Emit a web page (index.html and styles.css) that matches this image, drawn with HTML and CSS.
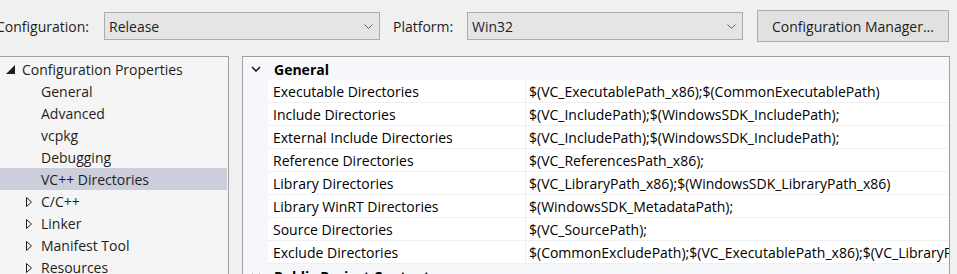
FILE: index.html
```html
<!DOCTYPE html>
<html>
<head>
    <title>Property Pages</title>
    <link rel="stylesheet" href="styles.css">
</head>
<body>
    <div class="toolbar">
        <span class="label">Configuration:</span>
        <div class="combo combo-config">
            <span>Release</span>
            <svg class="combo-arrow" width="9" height="5" viewBox="0 0 9 5"><path d="M0.5 0.5 L4.5 4.5 L8.5 0.5" fill="none" stroke="#606060" stroke-width="1"/></svg>
        </div>
        <span class="label label-platform">Platform:</span>
        <div class="combo combo-platform">
            <span>Win32</span>
            <svg class="combo-arrow" width="9" height="5" viewBox="0 0 9 5"><path d="M0.5 0.5 L4.5 4.5 L8.5 0.5" fill="none" stroke="#606060" stroke-width="1"/></svg>
        </div>
        <button class="manager">Configuration Manager...</button>
    </div>

    <div class="main">
        <div class="tree">
            <div class="node root">
                <svg class="expanded" width="9" height="9" viewBox="0 0 9 9"><polygon points="9,0 9,9 0,9" fill="#1e1e1e"/></svg>
                <span>Configuration Properties</span>
            </div>
            <div class="node child">General</div>
            <div class="node child">Advanced</div>
            <div class="node child">vcpkg</div>
            <div class="node child">Debugging</div>
            <div class="node child selected">VC++ Directories</div>
            <div class="node group">
                <svg class="collapsed" width="6" height="10" viewBox="0 0 6 10"><polygon points="0.5,0.5 5.5,5 0.5,9.5" fill="none" stroke="#1e1e1e" stroke-width="1"/></svg>
                <span>C/C++</span>
            </div>
            <div class="node group">
                <svg class="collapsed" width="6" height="10" viewBox="0 0 6 10"><polygon points="0.5,0.5 5.5,5 0.5,9.5" fill="none" stroke="#1e1e1e" stroke-width="1"/></svg>
                <span>Linker</span>
            </div>
            <div class="node group">
                <svg class="collapsed" width="6" height="10" viewBox="0 0 6 10"><polygon points="0.5,0.5 5.5,5 0.5,9.5" fill="none" stroke="#1e1e1e" stroke-width="1"/></svg>
                <span>Manifest Tool</span>
            </div>
            <div class="node group">
                <svg class="collapsed" width="6" height="10" viewBox="0 0 6 10"><polygon points="0.5,0.5 5.5,5 0.5,9.5" fill="none" stroke="#1e1e1e" stroke-width="1"/></svg>
                <span>Resources</span>
            </div>
        </div>

        <div class="grid">
            <div class="category">
                <svg class="chevron" width="10" height="6" viewBox="0 0 10 6"><path d="M1 1 L5 5 L9 1" fill="none" stroke="#1e1e1e" stroke-width="1.6"/></svg>
                <span>General</span>
            </div>
            <div class="prop"><div class="name">Executable Directories</div><div class="value">$(VC_ExecutablePath_x86);$(CommonExecutablePath)</div></div>
            <div class="prop"><div class="name">Include Directories</div><div class="value">$(VC_IncludePath);$(WindowsSDK_IncludePath);</div></div>
            <div class="prop"><div class="name">External Include Directories</div><div class="value">$(VC_IncludePath);$(WindowsSDK_IncludePath);</div></div>
            <div class="prop"><div class="name">Reference Directories</div><div class="value">$(VC_ReferencesPath_x86);</div></div>
            <div class="prop"><div class="name">Library Directories</div><div class="value">$(VC_LibraryPath_x86);$(WindowsSDK_LibraryPath_x86)</div></div>
            <div class="prop"><div class="name">Library WinRT Directories</div><div class="value">$(WindowsSDK_MetadataPath);</div></div>
            <div class="prop"><div class="name">Source Directories</div><div class="value">$(VC_SourcePath);</div></div>
            <div class="prop"><div class="name">Exclude Directories</div><div class="value">$(CommonExcludePath);$(VC_ExecutablePath_x86);$(VC_LibraryPath_x86);</div></div>
            <div class="category">
                <svg class="chevron" width="10" height="6" viewBox="0 0 10 6"><path d="M1 1 L5 5 L9 1" fill="none" stroke="#1e1e1e" stroke-width="1.6"/></svg>
                <span>Public Project Content</span>
            </div>
        </div>
    </div>
</body>
</html>
```

FILE: styles.css
```css
body {
    margin: 0;
    background: #f0f0f0;
    font-family: "Open Sans", "Noto Sans", sans-serif;
    font-size: 14px;
    color: #1e1e1e;
    overflow: hidden;
}

.toolbar {
    height: 46px;
    padding-top: 10px;
    box-sizing: content-box;
    display: flex;
    align-items: flex-start;
}

.label {
    line-height: 32px;
    padding-top: 1px;
    margin-left: -4px;
    width: 108px;
}

.label-platform {
    margin-left: 13px;
    width: 74px;
}

.combo {
    margin-top: 2px;
    height: 26px;
    border: 1px solid #acacac;
    background: #e5e5e5;
    display: flex;
    align-items: center;
    justify-content: space-between;
    padding: 1px 6px 0 4px;
    box-sizing: border-box;
    height: 28px;
}

.combo-config {
    width: 276px;
}

.combo-platform {
    width: 276px;
}

.combo-arrow {
    display: block;
    margin-top: -1px;
}

.manager {
    margin-left: 14px;
    width: 192px;
    height: 32px;
    border: 1px solid #adadad;
    background: #e1e1e1;
    font-family: inherit;
    font-size: 14px;
    color: #1e1e1e;
    padding: 1px 0 0;
}

.main {
    display: flex;
    align-items: flex-start;
}

.tree {
    width: 228px;
    height: 230px;
    border-top: 1px solid #a0a0a0;
    border-right: 1px solid #a0a0a0;
    background: #f5f5f5;
    padding-top: 1px;
}

.node {
    height: 22px;
    line-height: 22px;
    padding-top: 1px;
    box-sizing: border-box;
    display: flex;
    align-items: center;
    white-space: nowrap;
}

.node.root {
    padding-left: 6px;
}

.node.root .expanded {
    margin-right: 7px;
    margin-top: -1px;
}

.node.child {
    padding-left: 41px;
}

.node.group {
    padding-left: 26px;
}

.node.group .collapsed {
    margin-right: 9px;
}

.node.selected {
    background: #cccedb;
    margin-right: 1px;
}

.grid {
    margin-left: 13px;
    width: 706px;
    height: 230px;
    border: 1px solid #a0a0a0;
    border-bottom: none;
    background: #f5f7fa;
    overflow: hidden;
}

.category {
    height: 23px;
    padding-top: 1px;
    box-sizing: border-box;
    display: flex;
    align-items: center;
    font-weight: bold;
    color: #000;
}

.chevron {
    margin-left: 8px;
    margin-right: 13px;
    margin-top: -1px;
}

.prop {
    display: flex;
    height: 23px;
    margin-left: 25px;
    background: #fff;
    border-bottom: 1px solid #f0f0f0;
    box-sizing: border-box;
    white-space: nowrap;
}

.prop .name {
    width: 258px;
    padding-left: 5px;
    padding-top: 1px;
    box-sizing: border-box;
    border-right: 1px solid #f0f0f0;
    line-height: 22px;
    color: #000;
}

.prop .value {
    flex: 1;
    padding-left: 3px;
    padding-top: 1px;
    line-height: 22px;
    overflow: hidden;
    color: #000;
}
```
